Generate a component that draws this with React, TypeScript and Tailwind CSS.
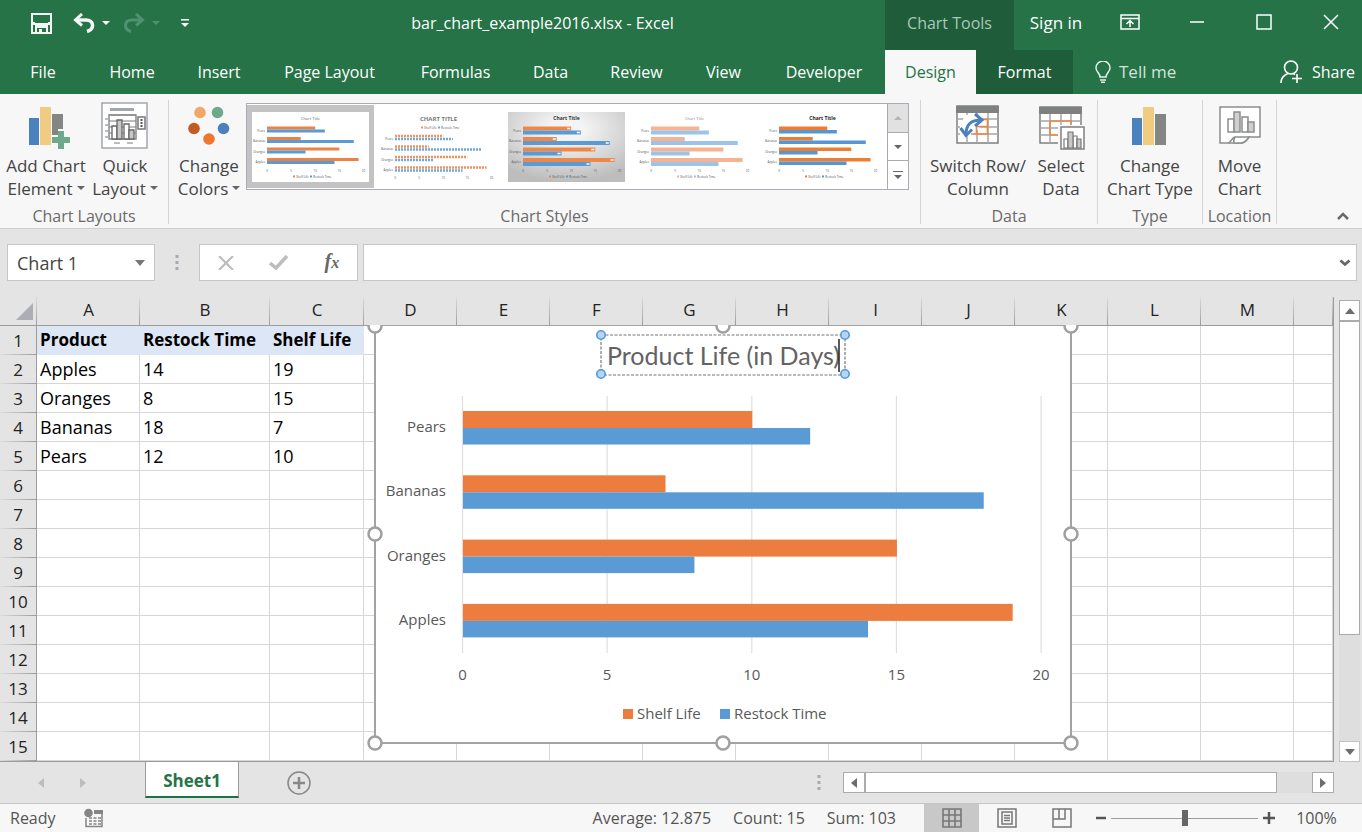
import React, { useState } from 'react';

const SERIES = [
    { name: 'Pears', shelf: 10, restock: 12 },
    { name: 'Bananas', shelf: 7, restock: 18 },
    { name: 'Oranges', shelf: 15, restock: 8 },
    { name: 'Apples', shelf: 19, restock: 14 },
];

const SHEET = [
    ['Product', 'Restock Time', 'Shelf Life'],
    ['Apples', '14', '19'],
    ['Oranges', '8', '15'],
    ['Bananas', '18', '7'],
    ['Pears', '12', '10'],
];

const COLUMNS = ['A', 'B', 'C', 'D', 'E', 'F', 'G', 'H', 'I', 'J', 'K', 'L', 'M', ''];
const ROWS = Array.from({ length: 15 }, (_, i) => i + 1);

const TABS = [
    { label: 'File', width: 'w-[86px]' },
    { label: 'Home', width: 'w-[92px]' },
    { label: 'Insert', width: 'w-[82px]' },
    { label: 'Page Layout', width: 'w-[139px]' },
    { label: 'Formulas', width: 'w-[113px]' },
    { label: 'Data', width: 'w-[77px]' },
    { label: 'Review', width: 'w-[95px]' },
    { label: 'View', width: 'w-[79px]' },
    { label: 'Developer', width: 'w-[122px]' },
    { label: 'Design', width: 'w-[91px]' },
    { label: 'Format', width: 'w-[97px]' },
];

function Caret({ className = '' }: { className?: string }) {
    return (
        <svg viewBox="0 0 8 4" className={`h-1 w-2 ${className}`} fill="currentColor" aria-hidden="true">
            <path d="M0 0h8L4 4z" />
        </svg>
    );
}

/* ---------- title bar ---------- */

function TitleBar() {
    return (
        <header className="flex h-[50px] text-white">
            <div className="flex w-[200px] items-center pb-1 pl-[31px]">
                <button aria-label="Save">
                    <svg viewBox="0 0 21 21" className="h-[21px] w-[21px]">
                        <path fill="#f3f6f4" d="M0 0h21v21H0z" />
                        <path fill="#257347" d="M2 2h2v8H2zM4 2h13v8H4zM17 2h2v8h-2zM2 12h2v7H2zM17 12h2v7h-2zM4 14h13v5H4z" />
                        <path fill="#f3f6f4" d="M2 9h2v3H2zM17 9h2v3h-2zM4 12h13v3H4zM4 15h2v4H4zM15 15h2v4h-2zM8 16h3v3H8z" />
                    </svg>
                </button>
                <button aria-label="Undo" className="ml-[21px]">
                    <svg viewBox="0 0 22 20" className="h-5 w-[22px]" fill="none" stroke="#f3f6f4">
                        <path strokeWidth="3" d="M9 1 2.500 7 9 12.500" />
                        <path strokeWidth="3.500" d="M3 7h10c8 0 9 9 1 11.500" />
                    </svg>
                </button>
                <button aria-label="Undo list" className="ml-[7px]"><Caret /></button>
                <button aria-label="Redo" className="ml-[13px] text-[#519171]">
                    <svg viewBox="0 0 22 20" className="h-5 w-[22px]" fill="none" stroke="currentColor">
                        <path strokeWidth="3" d="m13 1 6.500 6-6.500 5.500" />
                        <path strokeWidth="3" d="M19 7H9C1 7 0 16 8 18.500" />
                    </svg>
                </button>
                <button aria-label="Redo list" className="ml-[7px] text-[#519171]"><Caret /></button>
                <button aria-label="Customize toolbar" className="ml-5">
                    <svg viewBox="0 0 10 10" className="h-[10px] w-[10px]" fill="#fff">
                        <path d="M1 1h8v1.500H1zM1 5h8L5 9z" />
                    </svg>
                </button>
            </div>
            <h1 className="flex flex-1 items-center justify-center pb-1 text-base">bar_chart_example2016.xlsx - Excel</h1>
            <div className="flex w-[129px] items-center justify-center bg-[#1e5c3a] pb-1 text-base text-[#a9c9b7]">Chart Tools</div>
            <button className="w-[84px] pb-1 text-[17px]">Sign in</button>
            <button aria-label="Ribbon display options" className="flex w-16 items-center justify-center pb-1.5">
                <svg viewBox="0 0 20 16" className="h-4 w-5" fill="none" stroke="#fff" strokeWidth="1.500">
                    <path d="M1 1h18v14H1zM1 4.500h18M10 13V7M6.500 10 10 6.500l3.500 3.500" />
                </svg>
            </button>
            <button aria-label="Minimize" className="flex w-[70px] items-center justify-center pb-1.5">
                <svg viewBox="0 0 16 16" className="h-4 w-4" stroke="#fff" strokeWidth="1.500"><path d="M1 8h14" /></svg>
            </button>
            <button aria-label="Maximize" className="flex w-16 items-center justify-center pb-1.5">
                <svg viewBox="0 0 16 16" className="h-4 w-4" fill="none" stroke="#fff" strokeWidth="1.500"><path d="M1 1h14v14H1z" /></svg>
            </button>
            <button aria-label="Close" className="flex w-[66px] items-center justify-center pb-1.5 pl-1">
                <svg viewBox="0 0 16 16" className="h-4 w-4" stroke="#fff" strokeWidth="1.500"><path d="m1 1 14 14M15 1 1 15" /></svg>
            </button>
        </header>
    );
}

function TabBar({ active, onSelect }: { active: string; onSelect: (tab: string) => void }) {
    return (
        <nav className="flex h-11 text-base text-white">
            {TABS.map((tab) => (
                <button
                    key={tab.label}
                    onClick={() => onSelect(tab.label)}
                    className={`${tab.width} shrink-0 ${
                        active === tab.label
                            ? 'bg-[#f7f7f7] text-[#257347]'
                            : tab.label === 'Format'
                              ? 'bg-[#1e5c3a]'
                              : ''
                    }`}
                >
                    {tab.label}
                </button>
            ))}
            <button className="ml-[34px] flex items-center gap-2 text-[17px] text-[#d3e3da]">
                <svg viewBox="0 0 16 22" className="-ml-3 h-[22px] w-4" fill="none" stroke="#e9f1ec" strokeWidth="1.500">
                    <path d="M5 16c0-4-4-5-4-9a7 7 0 0 1 14 0c0 4-4 5-4 9zM5 19h6M6 21.200h4" />
                </svg>
                Tell me
            </button>
            <button className="mr-[7px] ml-auto flex items-center gap-2.5">
                <svg viewBox="0 0 22 24" className="h-6 w-[22px]" fill="none" stroke="#fff" strokeWidth="1.600">
                    <circle cx="11" cy="7.500" r="6.500" />
                    <path d="M1 23c0-5 3-8 7-9.500M13 13.500l2 1M17 14v9M12 18.500h10" />
                </svg>
                Share
            </button>
        </nav>
    );
}

/* ---------- ribbon icons ---------- */

function BarsIcon() {
    return (
        <svg viewBox="0 0 48 48" className="h-12 w-12">
            <path fill="#4a82bd" d="M6 16h10v27H6z" />
            <path fill="#efcc81" d="M17 5h11v38H17z" />
            <path fill="#848683" d="M29 12h11v31H29z" />
        </svg>
    );
}

function AddElementIcon() {
    return (
        <svg viewBox="0 0 48 48" className="h-12 w-12">
            <path fill="#4a82bd" d="M7 16h10v27H7z" />
            <path fill="#efcc81" d="M18 5h11v38H18z" />
            <path fill="#848683" d="M30 12h11v15h-5v6h-6z" />
            <path fill="#6fa98b" d="M36 29h6v6h6v6h-6v6h-6v-6h-6v-6h6z" />
        </svg>
    );
}

function QuickLayoutIcon() {
    return (
        <svg viewBox="0 0 48 48" className="h-12 w-12">
            <path fill="#fff" stroke="#a3a6ad" strokeWidth="1.500" d="M1 1h45v45H1z" />
            <path fill="#a3a6ad" d="M9 6h24v3H9z" />
            <path stroke="#a3a6ad" strokeWidth="1.500" d="M8 13h27M8 19h27M8 25h27M8 31h27M4 17h3M4 23h3M4 29h3M4 35h3M13 41h6M26 41h6" />
            <path fill="#fff" stroke="#777" strokeWidth="1.500" d="M37 15h7v12h-7z" />
            <path fill="none" stroke="#8a8a8a" strokeWidth="1.500" d="M8 13h27v24H8z" />
            <path fill="#fff" stroke="#666" strokeWidth="1.300" d="M11 24h5v13h-5zM23 22h5v15h-5z" />
            <path fill="#c8c8c8" stroke="#666" strokeWidth="1.300" d="M16 18h5v19h-5zM28 28h5v9h-5z" />
            <path fill="#555" d="M39.500 17h2v2h-2zM39.500 20h2v2h-2zM39.500 23h2v2h-2z" />
        </svg>
    );
}

function ColorsIcon() {
    return (
        <svg viewBox="0 0 48 48" className="h-12 w-12">
            <circle cx="15" cy="10.500" r="5.800" fill="#f0a868" />
            <circle cx="32.500" cy="10.500" r="5.800" fill="#70a88c" />
            <circle cx="9" cy="26.500" r="5.800" fill="#c15c22" />
            <circle cx="38.500" cy="26.500" r="5.800" fill="#4a82bd" />
            <circle cx="24" cy="37" r="5.800" fill="#f0752f" />
        </svg>
    );
}

function SwitchIcon() {
    return (
        <svg viewBox="0 0 48 48" className="h-12 w-12" fill="none">
            <path fill="#fff" stroke="#7f8180" strokeWidth="1.500" d="M3 4h41v37H3z" />
            <path fill="#7f8180" d="M2 4h43v7H2z" />
            <path stroke="#a5a7a6" strokeWidth="1.500" d="M3 17h41M3 25h41M3 32h41M13 11v30M23 11v30M34 11v30" />
            <path fill="#fff" d="M11 13h17v10l-9 10-13 3V24z" />
            <path stroke="#ee8648" strokeWidth="1.600" d="M17 32h16.500V17.500H29M22 24.500h11.500M22.500 24.500V32" />
            <path stroke="#4a82bd" strokeWidth="3" d="M12 33c0-10 4-15 16-15" />
            <path stroke="#4a82bd" strokeWidth="3" d="m21 12 7 6-7 6M6.500 26l5.500 7.500 6-6" />
        </svg>
    );
}

function SelectDataIcon() {
    return (
        <svg viewBox="0 0 48 48" className="h-12 w-12" fill="none">
            <path fill="#fff" stroke="#7f8180" strokeWidth="1.500" d="M3 5h41v36H3z" />
            <path fill="#7f8180" d="M2 5h43v7H2z" />
            <path stroke="#a5a7a6" strokeWidth="1.500" d="M3 19h41M3 26h41M3 33h41M13 12v29M24 12v29M34 12v29" />
            <path stroke="#ee8648" strokeWidth="1.600" d="M34 22.500V19H13v14h9" />
            <path fill="#f7f7f7" d="M21 23h27v25H21z" />
            <path fill="#fff" stroke="#7f8180" strokeWidth="1.500" d="M24 25h23v22H24z" />
            <path fill="#fff" stroke="#777" strokeWidth="1.200" d="M27 37h4v9h-4zM36 34h4v12h-4z" />
            <path fill="#c8c8c8" stroke="#777" strokeWidth="1.200" d="M31 30h5v16h-5zM40 37h4v9h-4z" />
        </svg>
    );
}

function MoveChartIcon() {
    return (
        <svg viewBox="0 0 48 48" className="h-12 w-12" fill="none" stroke="#8c8e8d" strokeWidth="1.500">
            <path fill="#fff" d="M4 5h40v30H33c-2 3-3 5-7 6H4z" />
            <path fill="#fff" d="M19 35h14c-2 3-4 6-8 6h-7c-1-2 0-4 1-6zM19 35c-3 0-4 6-7 6" />
            <path fill="#fff" d="M12 17h6v13h-6zM26 15h6v15h-6z" />
            <path fill="#d0d0d0" d="M18 10h6v20h-6zM32 20h6v10h-6z" />
        </svg>
    );
}

/* ---------- ribbon ---------- */

type BigButtonProps = { icon: React.ReactNode; lines: [string, string]; menu?: boolean; width: string };

function BigButton({ icon, lines, menu, width }: BigButtonProps) {
    return (
        <button className={`${width} flex shrink-0 flex-col items-center gap-1 text-[17px] leading-[23px] whitespace-nowrap text-[#444]`}>
            {icon}
            <span>
                {lines[0]}
                <br />
                {lines[1]}
                {menu && <Caret className="mb-1 ml-1 inline-block text-[#666]" />}
            </span>
        </button>
    );
}

function Group({ label, width, children }: { label: string; width: string; children: React.ReactNode }) {
    return (
        <section className={`${width} flex shrink-0 flex-col border-r border-[#d4d4d4]`}>
            <div className="flex h-[100px] justify-center pt-[2px]">{children}</div>
            <h2 className="pt-2 text-center text-base leading-4 text-[#6a6a6a]">{label}</h2>
        </section>
    );
}

type ThumbStyle = {
    title: string;
    titleSize: number;
    titleFill: string;
    weight: number;
    orange: string;
    blue: string;
    barHeight: number;
    shift: number;
    dashed?: boolean;
    shaded?: boolean;
};

const THUMBS: ThumbStyle[] = [
    { title: 'Chart Title', titleSize: 4, titleFill: '#666', weight: 400, orange: '#ec8244', blue: '#5b9bd5', barHeight: 3, shift: 0 },
    { title: 'CHART TITLE', titleSize: 6, titleFill: '#777', weight: 700, orange: '#f0925a', blue: '#6ea8dc', barHeight: 3, shift: 8, dashed: true },
    { title: 'Chart Title', titleSize: 5, titleFill: '#333', weight: 700, orange: '#ee8848', blue: '#5b9bd5', barHeight: 4, shift: 0, shaded: true },
    { title: 'Chart Title', titleSize: 4, titleFill: '#888', weight: 400, orange: '#f5b393', blue: '#9dc3e8', barHeight: 4, shift: 0 },
    { title: 'Chart Title', titleSize: 5, titleFill: '#222', weight: 700, orange: '#ed7d31', blue: '#5596d3', barHeight: 3.5, shift: 0 },
];

function Thumb({ style, index }: { style: ThumbStyle; index: number }) {
    const id = `shade-${index}`;
    return (
        <svg viewBox="0 0 117 70" className="h-[70px] w-[117px]" aria-hidden="true">
            {style.shaded && (
                <radialGradient id={id} cx="0.5" cy="0.25" r="0.75">
                    <stop offset="0.2" stopColor="#f4f4f4" />
                    <stop offset="1" stopColor="#bdbdbd" />
                </radialGradient>
            )}
            <rect width="117" height="70" fill={style.shaded ? `url(#${id})` : '#fff'} />
            <text x="58.500" y={8 + (style.dashed ? 1 : 0)} textAnchor="middle" fontSize={style.titleSize} fontWeight={style.weight} fill={style.titleFill}>
                {style.title}
            </text>
            {SERIES.map((row, i) => {
                const y = 14.500 + i * 10.500 + style.shift;
                return (
                    <g key={row.name}>
                        <text x="13" y={y + 5} textAnchor="end" fontSize="3" fill="#555">{row.name}</text>
                        {[
                            { value: row.shelf, fill: style.orange, top: y },
                            { value: row.restock, fill: style.blue, top: y + style.barHeight },
                        ].map((bar) => (
                            <path
                                key={bar.fill}
                                d={`M15 ${bar.top + style.barHeight / 2}h${bar.value * 4.82}`}
                                stroke={bar.fill}
                                strokeWidth={style.barHeight - (style.dashed ? 0.5 : 0)}
                                strokeDasharray={style.dashed ? '2 1' : undefined}
                            />
                        ))}
                        {style.shaded && (
                            <path
                                stroke="#fff"
                                strokeWidth="1.500"
                                d={`M${11 + row.shelf * 4.82} ${y + 2}h3M${11 + row.restock * 4.82} ${y + 6}h3`}
                            />
                        )}
                    </g>
                );
            })}
            {[0, 5, 10, 15, 20].map((n) => (
                <text key={n} x={15 + n * 4.82} y={style.dashed ? 67 : 60} textAnchor="middle" fontSize="3" fill="#555">{n}</text>
            ))}
            <g fontSize="3" fill="#555" transform={style.dashed ? 'translate(0 -49)' : undefined}>
                <path fill={style.orange} d="M41 63.500h2v2h-2z" />
                <text x="44" y="66">Shelf Life</text>
                <path fill={style.blue} d="M58 63.500h2v2h-2z" />
                <text x="61" y="66">Restock Time</text>
            </g>
        </svg>
    );
}

function StyleGallery() {
    const [selected, setSelected] = useState(0);
    return (
        <div className="mt-px flex h-[87px] border border-[#ababb5] bg-white">
            <div className="flex">
                {THUMBS.map((style, i) => (
                    <button
                        key={i}
                        aria-label={`Style ${i + 1}`}
                        onClick={() => setSelected(i)}
                        className={`my-px mr-px flex w-[127px] items-center justify-center ${selected === i ? 'bg-[#c3c3c3]' : ''}`}
                    >
                        <Thumb style={style} index={i} />
                    </button>
                ))}
            </div>
            <div className="flex w-[21px] flex-col divide-y divide-[#ababab] border-l border-[#ababab] text-[#666]">
                <button aria-label="Scroll up" className="flex flex-1 items-center justify-center bg-[#e1e1e1] text-[#b5b5b5]"><Caret className="rotate-180" /></button>
                <button aria-label="Scroll down" className="flex flex-1 items-center justify-center"><Caret /></button>
                <button aria-label="More styles" className="flex flex-1 flex-col items-center justify-center gap-[3px]">
                    <span className="h-px w-2.5 bg-[#666]" />
                    <Caret />
                </button>
            </div>
        </div>
    );
}

function Ribbon() {
    return (
        <div className="flex h-[135px] border-b border-[#cfcfcf] bg-[#f7f7f7] pt-[6px] pb-1">
            <Group label="Chart Layouts" width="w-[169px]">
                <BigButton icon={<AddElementIcon />} lines={['Add Chart', 'Element']} menu width="w-[82px]" />
                <BigButton icon={<QuickLayoutIcon />} lines={['Quick', 'Layout']} menu width="w-[76px]" />
            </Group>
            <Group label="Chart Styles" width="w-[752px]">
                <div className="flex flex-1 pr-[11px] pl-1">
                    <div className="flex-1">
                        <BigButton icon={<ColorsIcon />} lines={['Change', 'Colors']} menu width="w-[72px]" />
                    </div>
                    <StyleGallery />
                </div>
            </Group>
            <Group label="Data" width="w-[177px]">
                <BigButton icon={<SwitchIcon />} lines={['Switch Row/', 'Column']} width="w-[104px]" />
                <BigButton icon={<SelectDataIcon />} lines={['Select', 'Data']} width="w-[62px]" />
            </Group>
            <Group label="Type" width="w-[105px]">
                <BigButton icon={<BarsIcon />} lines={['Change', 'Chart Type']} width="w-[100px]" />
            </Group>
            <Group label="Location" width="w-[74px]">
                <BigButton icon={<MoveChartIcon />} lines={['Move', 'Chart']} width="w-[70px]" />
            </Group>
            <button aria-label="Collapse ribbon" className="mt-auto mr-3 mb-[3px] ml-auto">
                <svg viewBox="0 0 14 10" className="h-2.5 w-3.5" fill="none" stroke="#6a6a6a" strokeWidth="2.500"><path d="m2 8 5-5 5 5" /></svg>
            </button>
        </div>
    );
}

/* ---------- formula bar ---------- */

function Dots() {
    return (
        <svg viewBox="0 0 4 16" className="h-4 w-1" fill="#a9a9b1" aria-hidden="true">
            <path d="M.5 0h3v3h-3zM.5 6h3v3h-3zM.5 12h3v3h-3z" />
        </svg>
    );
}

function FormulaBar() {
    const [name, setName] = useState('Chart 1');
    const [formula, setFormula] = useState('');
    return (
        <div className="flex h-[68px] items-center pt-px pr-[5px] pb-[2px] pl-[7px]">
            <div className="flex h-[37px] w-[148px] items-center border border-[#c6c6c6] bg-white pr-[9px]">
                <input
                    aria-label="Name box"
                    value={name}
                    onChange={(e) => setName(e.target.value)}
                    className="w-0 flex-1 pl-[9px] text-lg text-[#444] outline-none"
                />
                <button aria-label="Name list" className="text-[#777]">
                    <svg viewBox="0 0 10 6" className="h-1.5 w-2.5" fill="currentColor"><path d="M0 0h10L5 6z" /></svg>
                </button>
            </div>
            <div className="flex w-11 justify-center"><Dots /></div>
            <div className="mr-[5px] flex h-[37px] w-[159px] items-center justify-around border border-[#c6c6c6] bg-white">
                <button aria-label="Cancel">
                    <svg viewBox="0 0 16 14" className="h-3.5 w-4" stroke="#bdbdbd" strokeWidth="2.200"><path d="m1 0 14 14M15 0 1 14" /></svg>
                </button>
                <button aria-label="Enter">
                    <svg viewBox="0 0 20 16" className="h-4 w-5" fill="none" stroke="#bdbdbd" strokeWidth="3.500"><path d="m1 8 6 5L18 1" /></svg>
                </button>
                <button aria-label="Insert function" className="font-['Liberation_Serif',serif] text-xl leading-5 font-bold text-[#666] italic">
                    f<span className="text-base">x</span>
                </button>
            </div>
            <div className="flex h-[37px] flex-1 items-center border border-[#c6c6c6] bg-white pr-[5px]">
                <input aria-label="Formula" value={formula} onChange={(e) => setFormula(e.target.value)} className="w-0 flex-1 px-2 text-lg outline-none" />
                <button aria-label="Expand formula bar">
                    <svg viewBox="0 0 12 8" className="h-2 w-3" fill="none" stroke="#666" strokeWidth="2.800"><path d="m1.500 1.500 4.500 4 4.500-4" /></svg>
                </button>
            </div>
        </div>
    );
}

/* ---------- sheet ---------- */

const UNIT = 28.93;

function Chart() {
    const handles = [[0, 1], [348, 1], [696, 1], [0, 209], [696, 209], [0, 418], [348, 418], [696, 418]];
    return (
        <svg
            viewBox="-8 0 712 427"
            className="absolute top-7 left-[367px] h-[427px] w-[712px] font-['Open_Sans','Noto_Sans',sans-serif]"
            role="img"
            aria-label="Product Life (in Days)"
        >
            <rect x="0" y="0" width="696" height="418" fill="#fff" stroke="#a3a3a3" strokeWidth="2" />
            {[0, 5, 10, 15, 20].map((n) => (
                <g key={n}>
                    <path stroke="#dfdfdf" strokeWidth="1.200" d={`M${87.500 + n * UNIT} 71v257`} />
                    <text x={87.500 + n * UNIT} y="355" textAnchor="middle" fontSize="15" fill="#595959">{n}</text>
                </g>
            ))}
            {SERIES.map((row, i) => {
                const y = 86 + i * 64.300;
                return (
                    <g key={row.name}>
                        <text x="71" y={y + 21} textAnchor="end" fontSize="15" fill="#595959">{row.name}</text>
                        <rect x="88" y={y} width={row.shelf * UNIT} height="17" fill="#ed7d3e" />
                        <rect x="88" y={y + 17} width={row.restock * UNIT} height="16.500" fill="#5b9bd5" />
                    </g>
                );
            })}
            <rect x="248" y="384" width="10" height="10" fill="#ed7d3e" />
            <text x="262" y="394" fontSize="15" fill="#595959">Shelf Life</text>
            <rect x="345" y="384" width="10" height="10" fill="#5b9bd5" />
            <text x="359" y="394" fontSize="15" fill="#595959">Restock Time</text>

            {handles.map(([x, y]) => (
                <circle key={`${x}-${y}`} cx={x} cy={y} r="6.500" fill="#fff" stroke="#a0a0a0" strokeWidth="2.500" />
            ))}

            <rect x="226" y="10" width="244" height="40" fill="#fff" stroke="#777" strokeWidth="1.200" strokeDasharray="3 1.500" />
            <text x="232" y="40" fontSize="25" fill="#636363" className="font-['Lato','Open_Sans',sans-serif]">Product Life (in Days)</text>
            <path stroke="#222" strokeWidth="1.500" d="M464 14v33" />
            {[[226, 10], [470, 10], [226, 49], [470, 49]].map(([x, y]) => (
                <circle key={`${x}-${y}`} cx={x} cy={y} r="4.200" fill="#b9d4ee" stroke="#4d9be0" strokeWidth="1.600" />
            ))}
        </svg>
    );
}

function Sheet() {
    return (
        <div className="relative flex-1 overflow-hidden border-r border-b border-[#9c9c9c] bg-white">
            <table className="w-full table-fixed border-separate border-spacing-0 text-[17px] text-black">
                <colgroup>
                    <col className="w-[37px]" />
                    <col className="w-[103px]" />
                    <col className="w-[130px]" />
                    <col className="w-[94px]" />
                    {COLUMNS.slice(3, 13).map((c) => <col key={c} className="w-[93px]" />)}
                    <col />
                </colgroup>
                <thead>
                    <tr className="h-[29px]">
                        <th className="border-b border-[#9c9c9c] bg-[#e4e4e4] bg-[linear-gradient(to_top,#9c9c9c,#dcdcdc)] bg-[length:1px_100%] bg-right bg-no-repeat p-0">
                            <svg viewBox="0 0 17 17" className="mr-1 ml-auto h-[17px] w-[17px]" fill="#adadb5" aria-hidden="true"><path d="M17 0v17H0z" /></svg>
                        </th>
                        {COLUMNS.map((c, i) => (
                            <th
                                key={i}
                                scope="col"
                                className="border-b border-[#9c9c9c] bg-[#e4e4e4] bg-[linear-gradient(to_top,#9c9c9c,#dcdcdc)] bg-[length:1px_100%] bg-right bg-no-repeat p-0 pb-[2px] leading-[26px] font-normal text-[#222]"
                            >
                                {c}
                            </th>
                        ))}
                    </tr>
                </thead>
                <tbody>
                    {ROWS.map((r) => (
                        <tr key={r} className="h-[29px]">
                            <th
                                scope="row"
                                className="border-r border-[#9c9c9c] bg-[#e4e4e4] bg-[linear-gradient(to_left,#9c9c9c,#dcdcdc)] bg-[length:100%_1px] bg-bottom bg-no-repeat p-0 leading-7 font-normal text-[#222]"
                            >
                                {r}
                            </th>
                            {COLUMNS.map((c, i) => {
                                const head = r === 1 && i < 3;
                                return (
                                    <td
                                        key={i}
                                        className={`overflow-visible border-r border-b p-0 pl-[3px] leading-7 whitespace-nowrap ${
                                            head ? 'border-[#dde6f5] bg-[#dde6f5] text-[17px] font-bold' : 'border-[#d6d6d6] text-lg leading-7'
                                        }`}
                                    >
                                        {SHEET[r - 1]?.[i]}
                                    </td>
                                );
                            })}
                        </tr>
                    ))}
                </tbody>
            </table>
            <Chart />
        </div>
    );
}

function ScrollColumn() {
    return (
        <div className="mt-[3px] mr-[2px] ml-[5px] flex w-[21px] flex-col bg-[#dedede] text-[#6c6c6c]">
            <button aria-label="Scroll up" className="flex h-[21px] items-center justify-center border border-[#ababab] bg-white">
                <svg viewBox="0 0 10 6" className="h-1.5 w-2.5" fill="currentColor"><path d="M5 0l5 6H0z" /></svg>
            </button>
            <div className="h-[314px] border border-[#ababab] bg-white" />
            <button aria-label="Scroll down" className="mt-auto flex h-[21px] items-center justify-center border border-[#c3c3c3] bg-white">
                <svg viewBox="0 0 10 6" className="h-1.5 w-2.5" fill="currentColor"><path d="M0 0h10L5 6z" /></svg>
            </button>
        </div>
    );
}

function SheetTabs() {
    return (
        <div className="flex h-[41px] items-center pr-7">
            <button aria-label="Previous sheet" className="ml-[38px] text-[#bdbdbd]">
                <svg viewBox="0 0 6 10" className="h-2.5 w-1.5" fill="currentColor"><path d="M6 0v10L0 5z" /></svg>
            </button>
            <button aria-label="Next sheet" className="ml-9 text-[#bdbdbd]">
                <svg viewBox="0 0 6 10" className="h-2.5 w-1.5" fill="currentColor"><path d="M0 0v10l6-5z" /></svg>
            </button>
            <button className="ml-[59px] h-9 w-[94px] self-start border-x border-b-2 border-x-[#9c9c9c] border-b-[#1f7246] bg-white pt-1 text-[17px] font-bold text-[#257347]">
                Sheet1
            </button>
            <button aria-label="New sheet" className="ml-12">
                <svg viewBox="0 0 24 24" className="h-6 w-6" fill="none" stroke="#888">
                    <circle cx="12" cy="12" r="11" strokeWidth="1.500" />
                    <path strokeWidth="2.500" d="M12 6v12M6 12h12" />
                </svg>
            </button>
            <div className="mr-[22px] ml-auto"><Dots /></div>
            <div className="flex h-[21px] w-[491px] bg-[#dedede] text-[#6c6c6c]">
                <button aria-label="Scroll left" className="flex w-[22px] items-center justify-center border border-[#ababab] bg-white">
                    <svg viewBox="0 0 6 10" className="h-2.5 w-1.5" fill="currentColor"><path d="M6 0v10L0 5z" /></svg>
                </button>
                <div className="w-[412px] border border-[#ababab] bg-white" />
                <button aria-label="Scroll right" className="ml-auto flex w-[22px] items-center justify-center border border-[#ababab] bg-white">
                    <svg viewBox="0 0 6 10" className="h-2.5 w-1.5" fill="currentColor"><path d="M0 0v10l6-5z" /></svg>
                </button>
            </div>
        </div>
    );
}

function StatusBar() {
    const [zoom, setZoom] = useState(100);
    return (
        <footer className="flex h-[29px] items-center border-t border-[#c6c6c6] bg-[#f7f7f7] text-base text-[#555]">
            <span className="w-[84px] pl-[10px]">Ready</span>
            <button aria-label="Record macro">
                <svg viewBox="0 0 20 20" className="h-5 w-5">
                    <path fill="none" stroke="#848683" strokeWidth="1.500" d="M2 10v8.500h16V6" />
                    <path fill="#848683" d="M10 2h9v4h-9z" />
                    <circle cx="4.500" cy="5" r="4.300" fill="#848683" />
                    <path stroke="#848683" strokeWidth="1.500" strokeDasharray="3 1.500" d="M5 10h12M5 13h12M5 16h12" />
                </svg>
            </button>
            <div className="ml-auto flex gap-[22px] pr-7">
                <span>Average: 12.875</span>
                <span>Count: 15</span>
                <span>Sum: 103</span>
            </div>
            <button aria-label="Normal view" className="flex h-full w-[55px] items-center justify-center bg-[#c8c8c8]">
                <svg viewBox="0 0 20 20" className="h-5 w-5" fill="none" stroke="#777" strokeWidth="1.600"><path d="M1 1h18v18H1zM1 7h18M1 13h18M7 1v18M13 1v18" /></svg>
            </button>
            <button aria-label="Page layout view" className="flex h-full w-[56px] items-center justify-center">
                <svg viewBox="0 0 20 20" className="h-5 w-5" fill="none" stroke="#777" strokeWidth="1.500"><path d="M1 1h18v18H1zM5 4h10v12H5zM7 7.500h6M7 10h6M7 12.500h6" /></svg>
            </button>
            <button aria-label="Page break view" className="flex h-full w-[54px] items-center justify-center">
                <svg viewBox="0 0 20 20" className="h-5 w-5" fill="none" stroke="#777" strokeWidth="1.500"><path d="M1 1h18v18H1zM1 11h12V1M7 1v10" /></svg>
            </button>
            <button aria-label="Zoom out" className="ml-[7px]">
                <svg viewBox="0 0 10 12" className="h-3 w-2.5" stroke="#555" strokeWidth="2.500"><path d="M0 6h10" /></svg>
            </button>
            <input
                type="range"
                aria-label="Zoom"
                min="0"
                max="200"
                value={zoom}
                onChange={(e) => setZoom(Number(e.target.value))}
                className="mx-[5px] h-4 w-[147px] appearance-none bg-[linear-gradient(#9c9c9c,#9c9c9c)] bg-[length:100%_1px] bg-center bg-no-repeat [&::-webkit-slider-thumb]:h-4 [&::-webkit-slider-thumb]:w-[6px] [&::-webkit-slider-thumb]:appearance-none [&::-webkit-slider-thumb]:bg-[#666]"
            />
            <button aria-label="Zoom in">
                <svg viewBox="0 0 12 12" className="h-3 w-3" stroke="#555" strokeWidth="2.500"><path d="M0 6h12M6 0v12" /></svg>
            </button>
            <span className="w-[87px] pr-1 text-center">{zoom}%</span>
        </footer>
    );
}

export default function App() {
    const [tab, setTab] = useState('Design');
    return (
        <div className="flex min-h-screen flex-col bg-[#e4e4e4] font-['Open_Sans','Noto_Sans',sans-serif]">
            <div className="bg-[#257347]">
                <TitleBar />
                <TabBar active={tab} onSelect={setTab} />
            </div>
            <Ribbon />
            <FormulaBar />
            <main className="flex flex-1">
                <Sheet />
                <ScrollColumn />
            </main>
            <SheetTabs />
            <StatusBar />
        </div>
    );
}
